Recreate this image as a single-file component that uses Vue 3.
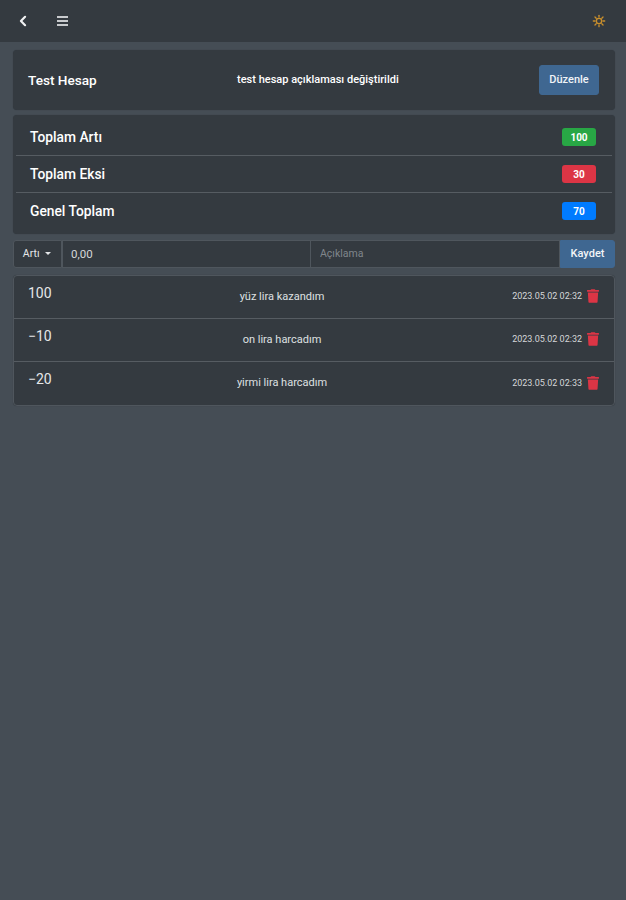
<template>
  <div class="page">
    <nav class="topbar">
      <div class="nav-left">
        <svg class="nav-icon" viewBox="0 0 12 16" fill="none" stroke="#f1f2f3" stroke-width="2.6" stroke-linecap="round" stroke-linejoin="round">
          <polyline points="8.5,3 3.5,8 8.5,13"></polyline>
        </svg>
        <span class="bars"><i></i><i></i><i></i></span>
      </div>
      <svg class="sun" viewBox="0 0 16 16" fill="none" stroke="#c98f2c" stroke-width="1.5" stroke-linecap="round">
        <circle cx="8" cy="8" r="3"></circle>
        <line x1="8" y1="1.5" x2="8" y2="3.5"></line>
        <line x1="8" y1="12.5" x2="8" y2="14.5"></line>
        <line x1="1.5" y1="8" x2="3.5" y2="8"></line>
        <line x1="12.5" y1="8" x2="14.5" y2="8"></line>
        <line x1="3.4" y1="3.4" x2="4.8" y2="4.8"></line>
        <line x1="11.2" y1="11.2" x2="12.6" y2="12.6"></line>
        <line x1="3.4" y1="12.6" x2="4.8" y2="11.2"></line>
        <line x1="11.2" y1="4.8" x2="12.6" y2="3.4"></line>
      </svg>
    </nav>

    <main class="content">
      <section class="card head-card">
        <h1 class="account-name">Test Hesap</h1>
        <p class="account-desc">test hesap açıklaması değiştirildi</p>
        <button class="btn edit-btn">Düzenle</button>
      </section>

      <section class="card totals">
        <div v-for="t in totals" :key="t.label" class="total-row">
          <span class="total-label">{{ t.label }}</span>
          <span class="badge" :class="t.cls">{{ t.value }}</span>
        </div>
      </section>

      <form class="entry" @submit.prevent>
        <button type="button" class="type-select">Artı <span class="caret"></span></button>
        <input class="field amount-field" type="text" value="0,00" />
        <input class="field desc-field" type="text" placeholder="Açıklama" />
        <button class="btn save-btn">Kaydet</button>
      </form>

      <section class="card records">
        <div v-for="r in records" :key="r.desc" class="record">
          <span class="amount">{{ r.amount }}</span>
          <span class="record-desc">{{ r.desc }}</span>
          <span class="record-end">
            <span class="date">{{ r.date }}</span>
            <svg class="trash" viewBox="0 0 448 512" fill="#dc3545">
              <path d="M432 32H312l-9.4-18.7A24 24 0 0 0 281.1 0H166.8a23.72 23.72 0 0 0-21.4 13.3L136 32H16A16 16 0 0 0 0 48v32a16 16 0 0 0 16 16h416a16 16 0 0 0 16-16V48a16 16 0 0 0-16-16zM53.2 467a48 48 0 0 0 47.9 45h245.8a48 48 0 0 0 47.9-45L416 128H32z"></path>
            </svg>
          </span>
        </div>
      </section>
    </main>
  </div>
</template>

<script setup>
const totals = [
  { label: 'Toplam Artı', value: 100, cls: 'green' },
  { label: 'Toplam Eksi', value: 30, cls: 'red' },
  { label: 'Genel Toplam', value: 70, cls: 'blue' },
]

const records = [
  { amount: '100', desc: 'yüz lira kazandım', date: '2023.05.02 02:32' },
  { amount: '−10', desc: 'on lira harcadım', date: '2023.05.02 02:32' },
  { amount: '−20', desc: 'yirmi lira harcadım', date: '2023.05.02 02:33' },
]
</script>

<style>
body {
  margin: 0;
  background: #454d55;
}
</style>

<style scoped>
.page {
  min-height: 900px;
  background: #454d55;
  color: #fff;
  font-family: Roboto, "Liberation Sans", sans-serif;
}

.topbar {
  height: 42px;
  background: #343a40;
  display: flex;
  align-items: center;
  justify-content: space-between;
  padding: 0 20px 0 18px;
}

.nav-left {
  display: flex;
  align-items: center;
  gap: 29px;
}

.nav-icon {
  width: 10px;
  height: 14px;
}

.bars {
  display: flex;
  flex-direction: column;
  gap: 2px;
  width: 11px;
}

.bars i {
  display: block;
  height: 2px;
  background: #c9cbce;
}

.sun {
  width: 14px;
  height: 14px;
}

.content {
  padding: 8px 11px 0 13px;
  display: flex;
  flex-direction: column;
}

.card {
  background: #343a40;
  border-radius: 4px;
  box-shadow: 0 0 1px rgba(0, 0, 0, 0.3);
}

.head-card {
  height: 60px;
  box-sizing: border-box;
  padding: 0 16px 0 15px;
  display: flex;
  align-items: center;
  justify-content: space-between;
}

.account-name {
  margin: 0 0 1px;
  font-size: 13.6px;
  font-weight: 500;
}

.account-desc {
  margin: 0 0 2px;
  font-size: 11px;
  font-weight: 500;
}

.btn {
  border: 1px solid #3f6791;
  background: #3f6791;
  color: #f1f4f7;
  font-family: inherit;
  font-size: 11px;
  font-weight: 500;
  padding: 0 0 1px;
}

.edit-btn {
  width: 60px;
  height: 30px;
  border-radius: 3px;
}

.totals {
  margin-top: 5px;
  height: 119px;
  box-sizing: border-box;
  padding: 4px 3px;
}

.total-row {
  height: 37px;
  box-sizing: border-box;
  display: flex;
  align-items: center;
  justify-content: space-between;
  padding: 0 16px 0 14px;
  border-bottom: 1px solid #565c62;
}

.total-row:last-child {
  border-bottom: none;
  padding-bottom: 1px;
}

.total-label {
  font-size: 13.8px;
  font-weight: 500;
}

.badge {
  width: 34px;
  height: 18px;
  border-radius: 3px;
  display: flex;
  align-items: center;
  justify-content: center;
  font-size: 10px;
  font-weight: 700;
}

.green { background: #28a745; }
.red { background: #dc3545; }
.blue { background: #007bff; }

.entry {
  margin-top: 6px;
  height: 28px;
  display: flex;
}

.type-select {
  width: 49px;
  flex: none;
  box-sizing: border-box;
  background: #343a40;
  border: 1px solid #4f565d;
  color: #e4e6e8;
  font-family: inherit;
  font-size: 10.5px;
  padding: 0 1px 1px 0;
  border-radius: 3px 0 0 3px;
}

.caret {
  display: inline-block;
  margin-left: 3px;
  vertical-align: 2px;
  border-top: 3px solid #e4e6e8;
  border-left: 3px solid transparent;
  border-right: 3px solid transparent;
}

.field {
  flex: 1;
  min-width: 0;
  box-sizing: border-box;
  height: 28px;
  background: #343a40;
  border: 1px solid #4f565d;
  color: #d5d7d9;
  font-family: inherit;
  font-size: 10.5px;
  padding: 0 9px 1px;
  outline: none;
}

.field::placeholder {
  color: #80868c;
}

.amount-field {
  font-size: 11.5px;
  padding-left: 8px;
}

.desc-field {
  margin-left: -1px;
}

.save-btn {
  width: 55px;
  flex: none;
  height: 28px;
  border-radius: 0 3px 3px 0;
}

.records {
  margin-top: 7px;
  border: 1px solid #4f565d;
  box-sizing: border-box;
  height: 131px;
}

.record {
  height: 43px;
  display: grid;
  grid-template-columns: 67px 1fr 130px;
  box-sizing: border-box;
  padding: 0 15px 2px 14px;
  border-bottom: 1px solid #565c62;
}

.record:last-child {
  border-bottom: none;
}

.amount {
  font-size: 14px;
  color: #e6e7e8;
  padding-top: 9px;
}

.record-desc {
  font-size: 11px;
  color: #dfe0e2;
  text-align: center;
  align-self: center;
  white-space: nowrap;
}

.record-end {
  display: flex;
  align-items: center;
  justify-content: flex-end;
  gap: 5px;
}

.date {
  font-size: 9px;
  color: #d5d7d9;
  white-space: nowrap;
}

.trash {
  width: 12px;
  height: 14px;
  flex: none;
}
</style>
